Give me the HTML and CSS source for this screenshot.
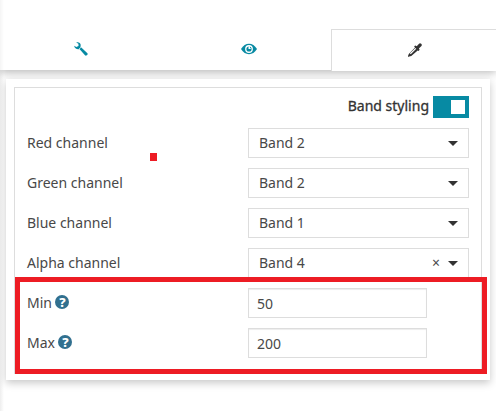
FILE: index.html
```
<!DOCTYPE html>
<html lang="en">
<head>
<meta charset="utf-8">
<title>Band styling</title>
<link rel="stylesheet" href="styles.css">
</head>
<body>
<nav class="tabs">
  <button class="tab" aria-label="Tools"><svg width="14" height="14" viewBox="0 0 14 14"><path fill="currentColor" d="M2.2.5C4.2-.4 6.7.8 6.7 3.1L6.5 4.7 13.4 11.2Q14 12 13.2 12.9L12.3 13.6Q11.7 14 11 13.3L5.4 7.1C3.1 7.8.3 6.3.2 3.8L2.3 5.1 4.5 4 4.4 1.8Z"/><path stroke="#fff" stroke-width=".8" d="M5 7.2 7.4 4.8"/></svg></button>
  <button class="tab view" aria-label="View"><svg width="16" height="12" viewBox="0 0 16 12"><path fill="currentColor" d="M0 6Q3.3.8 8 .8T16 6Q12.7 11.2 8 11.2T0 6Z"/><circle cx="8" cy="6" r="3.25" fill="currentColor" stroke="#fff" stroke-width="1.3"/><path fill="#fff" d="M7.5 3.3H9V5.1L10.5 6H7.5Z"/></svg></button>
  <button class="tab active" aria-label="Style"><svg width="14" height="14" viewBox="0 0 14 14"><path fill="currentColor" d="M6.1 3.2 7.4 2.4 8.7 3.2 10.8.9Q12-.3 13.2.8T13.2 3.3L10.9 5.4 11.6 6.6 10.8 8 9.7 7.4 3.3 13 1.2 13.5 0 14 .2 12.3 1 10.7 7 4.6Z"/><path stroke="#fff" stroke-width="1.2" d="M2.3 10.8 7.8 5.4"/></svg></button>
</nav>
<main class="card">
  <section class="panel">
    <div class="heading"><span>Band styling</span><span class="toggle"><i></i></span></div>
    <div class="row"><label>Red channel</label><div class="select"><span>Band 2</span><i class="caret"></i></div></div>
    <div class="row"><label>Green channel</label><div class="select"><span>Band 2</span><i class="caret"></i></div></div>
    <div class="row"><label>Blue channel</label><div class="select"><span>Band 1</span><i class="caret"></i></div></div>
    <div class="row"><label>Alpha channel</label><div class="select"><span>Band 4</span><b class="clear">×</b><i class="caret"></i></div></div>
    <div class="row"><label>Min <span class="help">?</span></label><div class="field">50</div></div>
    <div class="row"><label>Max <span class="help">?</span></label><div class="field">200</div></div>
  </section>
  <div class="highlight"></div>
  <div class="marker"></div>
</main>
</body>
</html>
```
FILE: styles.css
```
* { box-sizing: border-box; }
body {
  margin: 0;
  height: 411px;
  overflow: hidden;
  background: linear-gradient(90deg, #eee, #fff 4px);
  color: #484848;
  font: 14px/20px "Noto Sans", sans-serif;
}
.tabs {
  position: relative;
  display: grid;
  grid-template-columns: 165px 166px 165px;
  align-items: start;
  height: 70px;
  padding-top: 29px;
  background: linear-gradient(90deg, #f5f5f5, #fff 4px);
  box-shadow: 0 3px 8px rgba(0, 0, 0, .26);
}
.tab {
  display: flex;
  align-items: center;
  justify-content: center;
  height: 41px;
  padding: 0 2px 1px 0;
  border: 0;
  background: none;
  color: #078aa3;
}
.tab:first-child { padding-right: 3px; }
.tab.view { padding: 0 0 1px 2px; }
.tab.active {
  height: 42px;
  padding: 0 0 1px 1px;
  border: solid #ddd;
  border-width: 1px 0 0 1px;
  background: #fff;
  color: #333;
}
.card {
  position: relative;
  width: 484px;
  height: 301px;
  margin: 9px 0 0 6px;
  padding: 8px;
  background: #fff;
  box-shadow: 0 3px 8px rgba(0, 0, 0, .22);
}
.panel {
  width: 468px;
  height: 287px;
  padding: 8px 12px 0;
  border: 1px solid #ddd;
}
.heading {
  display: flex;
  align-items: center;
  justify-content: flex-end;
  gap: 4px;
  height: 22px;
  margin-bottom: 10px;
  color: #333;
  -webkit-text-stroke: .3px #333;
}
.heading > span:first-child { position: relative; top: -1px; }
.toggle {
  display: flex;
  justify-content: flex-end;
  width: 36px;
  height: 22px;
  padding: 4px;
  background: #078aa3;
}
.toggle i { width: 14px; height: 14px; background: #fff; }
.row {
  display: grid;
  grid-template-columns: 221px 221px;
  height: 30px;
  margin-bottom: 10px;
  line-height: 30px;
}
.row label { display: flex; align-items: center; gap: 3.5px; height: 29px; line-height: 29px; }
.select {
  display: flex;
  align-items: center;
  padding: 0 10px;
  border: 1px solid #ddd;
  line-height: 28px;
}
.select span { flex: 1; }
.caret {
  border: solid transparent;
  border-width: 5px 5px 0;
  border-top-color: #333;
}
.clear { margin-right: 8px; font-weight: 400; }
.field {
  width: 179px;
  height: 30px;
  padding: 1px 8px 0;
  border: 1px solid #ddd;
  box-shadow: inset 0 1px 1px rgba(0, 0, 0, .075);
  line-height: 28px;
}
.help {
  width: 14px;
  height: 14px;
  margin-bottom: 1px;
  border-radius: 50%;
  background: #31708f;
  color: #fff;
  font: 800 13px/14px "Noto Sans", sans-serif;
  text-align: center;
}
.highlight {
  position: absolute;
  left: 9px;
  top: 198px;
  width: 472px;
  height: 97px;
  border: 5px solid #ed1c24;
}
.marker {
  position: absolute;
  left: 144px;
  top: 74px;
  width: 7px;
  height: 8px;
  background: #ed1c24;
}
```
